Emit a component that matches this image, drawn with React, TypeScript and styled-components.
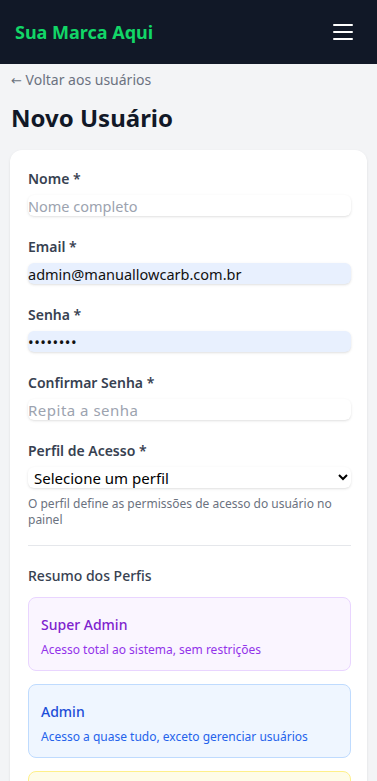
import React from 'react'
import styled, { createGlobalStyle } from 'styled-components'

const GlobalStyle = createGlobalStyle`
    * { box-sizing: border-box; }
    html, body {
        margin: 0;
        padding: 0;
        background: #F3F4F6;
        font-family: 'Noto Sans', 'Liberation Sans', sans-serif;
        color: #111827;
    }
`

interface Perfil {
    nome: string;
    descricao: string;
    tom: 'roxo' | 'azul' | 'amarelo';
}

const perfis: Perfil[] = [
    { nome: 'Super Admin', descricao: 'Acesso total ao sistema, sem restrições', tom: 'roxo' },
    { nome: 'Admin', descricao: 'Acesso a quase tudo, exceto gerenciar usuários', tom: 'azul' },
    { nome: 'Editor', descricao: 'Pode criar e editar conteúdo', tom: 'amarelo' },
]

const tons = {
    roxo: { bg: '#FAF5FF', border: '#E9D5FF', title: '#7E22CE', text: '#9333EA' },
    azul: { bg: '#EFF6FF', border: '#BFDBFE', title: '#1D4ED8', text: '#2563EB' },
    amarelo: { bg: '#FEFCE8', border: '#FEF08A', title: '#A16207', text: '#CA8A04' },
}

function App() {
    return (
        <>
            <GlobalStyle />
            <Header>
                <Brand>Sua Marca Aqui</Brand>
                <MenuButton aria-label="Abrir menu">
                    <svg width="20" height="16" viewBox="0 0 20 16">
                        <g stroke="#fff" strokeWidth="2" strokeLinecap="round">
                            <line x1="1" y1="1" x2="19" y2="1" />
                            <line x1="1" y1="8" x2="19" y2="8" />
                            <line x1="1" y1="15" x2="19" y2="15" />
                        </g>
                    </svg>
                </MenuButton>
            </Header>

            <Main>
                <BackLink href="#"><Arrow>←</Arrow> Voltar aos usuários</BackLink>
                <Title>Novo Usuário</Title>

                <Card>
                    <Field>
                        <Label>Nome *</Label>
                        <Input type="text" placeholder="Nome completo" />
                    </Field>
                    <Field>
                        <Label>Email *</Label>
                        <Input type="email" defaultValue="admin@manuallowcarb.com.br" $filled />
                    </Field>
                    <Field>
                        <Label>Senha *</Label>
                        <Input type="password" defaultValue="12345678" $filled />
                    </Field>
                    <Field>
                        <Label>Confirmar Senha *</Label>
                        <Input type="password" placeholder="Repita a senha" />
                    </Field>
                    <Field>
                        <Label>Perfil de Acesso *</Label>
                        <Select defaultValue="">
                            <option value="">Selecione um perfil</option>
                            <option value="super">Super Admin</option>
                            <option value="admin">Admin</option>
                            <option value="editor">Editor</option>
                        </Select>
                        <Help>O perfil define as permissões de acesso do usuário no painel</Help>
                    </Field>

                    <Resumo>
                        <ResumoTitle>Resumo dos Perfis</ResumoTitle>
                        <PerfilList>
                            {perfis.map((p) => (
                                <PerfilCard key={p.nome} $tom={p.tom}>
                                    <PerfilName $tom={p.tom}>{p.nome}</PerfilName>
                                    <PerfilDesc $tom={p.tom}>{p.descricao}</PerfilDesc>
                                </PerfilCard>
                            ))}
                        </PerfilList>
                    </Resumo>
                </Card>
            </Main>
        </>
    )
}

export default App

const Header = styled.header`
    height: 64px;
    background: #111827;
    display: flex;
    align-items: center;
    justify-content: space-between;
    padding: 0 24px 0 15px;
`

const Brand = styled.span`
    color: #12D667;
    font-weight: 700;
    font-size: 18px;
`

const MenuButton = styled.button`
    background: transparent;
    border: none;
    padding: 0;
    width: 20px;
    height: 16px;
    display: flex;
    cursor: pointer;
`

const Main = styled.main`
    padding: 6px 10px 24px;
`

const BackLink = styled.a`
    display: block;
    color: #6B7280;
    font-size: 14px;
    line-height: 20px;
    text-decoration: none;
    padding-left: 1px;
`

const Arrow = styled.span`
    font-family: 'DejaVu Sans', sans-serif;
    font-size: 13px;
`

const Title = styled.h1`
    margin: 11px 0 16px;
    font-size: 24px;
    line-height: 32px;
    font-weight: 700;
    color: #111827;
    padding-left: 1px;
`

const Card = styled.div`
    background: #fff;
    border-radius: 12px;
    box-shadow: 0 1px 3px rgba(0, 0, 0, 0.08), 0 1px 2px -1px rgba(0, 0, 0, 0.08);
    padding: 19px 16px 16px 18px;
    display: flex;
    flex-direction: column;
    gap: 21px;
`

const Field = styled.div`
    display: flex;
    flex-direction: column;
`

const Label = styled.label`
    font-size: 14px;
    line-height: 20px;
    font-weight: 600;
    color: #374151;
    margin-bottom: 6px;
`

const Input = styled.input<{ $filled?: boolean }>`
    display: block;
    width: 100%;
    height: 21px;
    border: none;
    outline: none;
    padding: 0;
    border-radius: 6px;
    font-family: inherit;
    font-size: 14.5px;
    color: #111;
    background: ${(p) => (p.$filled ? '#E8F0FE' : '#fff')};
    box-shadow: 0 1px 3px rgba(0, 0, 0, 0.1), 0 1px 2px -1px rgba(0, 0, 0, 0.1);
    &::placeholder {
        color: #9CA3AF;
    }
    &[type='password'] {
        letter-spacing: 0.5px;
        font-size: 15px;
    }
`

const Select = styled.select`
    display: block;
    width: 100%;
    height: 21px;
    border: none;
    outline: none;
    padding: 0 0 0 2px;
    border-radius: 6px;
    font-family: inherit;
    font-size: 15px;
    color: #000;
    background: #fff;
    box-shadow: 0 1px 3px rgba(0, 0, 0, 0.1), 0 1px 2px -1px rgba(0, 0, 0, 0.1);
`

const Help = styled.p`
    margin: 8px 0 0;
    font-size: 12px;
    line-height: 16px;
    color: #6B7280;
`

const Resumo = styled.div`
    border-top: 1px solid #E5E7EB;
    padding-top: 20px;
    margin-top: -4px;
`

const ResumoTitle = styled.h3`
    margin: 0 0 11px;
    font-size: 14px;
    line-height: 20px;
    font-weight: 500;
    color: #374151;
`

const PerfilList = styled.div`
    display: flex;
    flex-direction: column;
    gap: 13px;
`

type Tom = keyof typeof tons

const PerfilCard = styled.div<{ $tom: Tom }>`
    background: ${(p) => tons[p.$tom].bg};
    border: 1px solid ${(p) => tons[p.$tom].border};
    border-radius: 8px;
    padding: 17px 12px 10px;
`

const PerfilName = styled.div<{ $tom: Tom }>`
    font-size: 14px;
    line-height: 20px;
    font-weight: 500;
    color: ${(p) => tons[p.$tom].title};
`

const PerfilDesc = styled.div<{ $tom: Tom }>`
    margin-top: 5px;
    font-size: 12px;
    line-height: 20px;
    color: ${(p) => tons[p.$tom].text};
`
